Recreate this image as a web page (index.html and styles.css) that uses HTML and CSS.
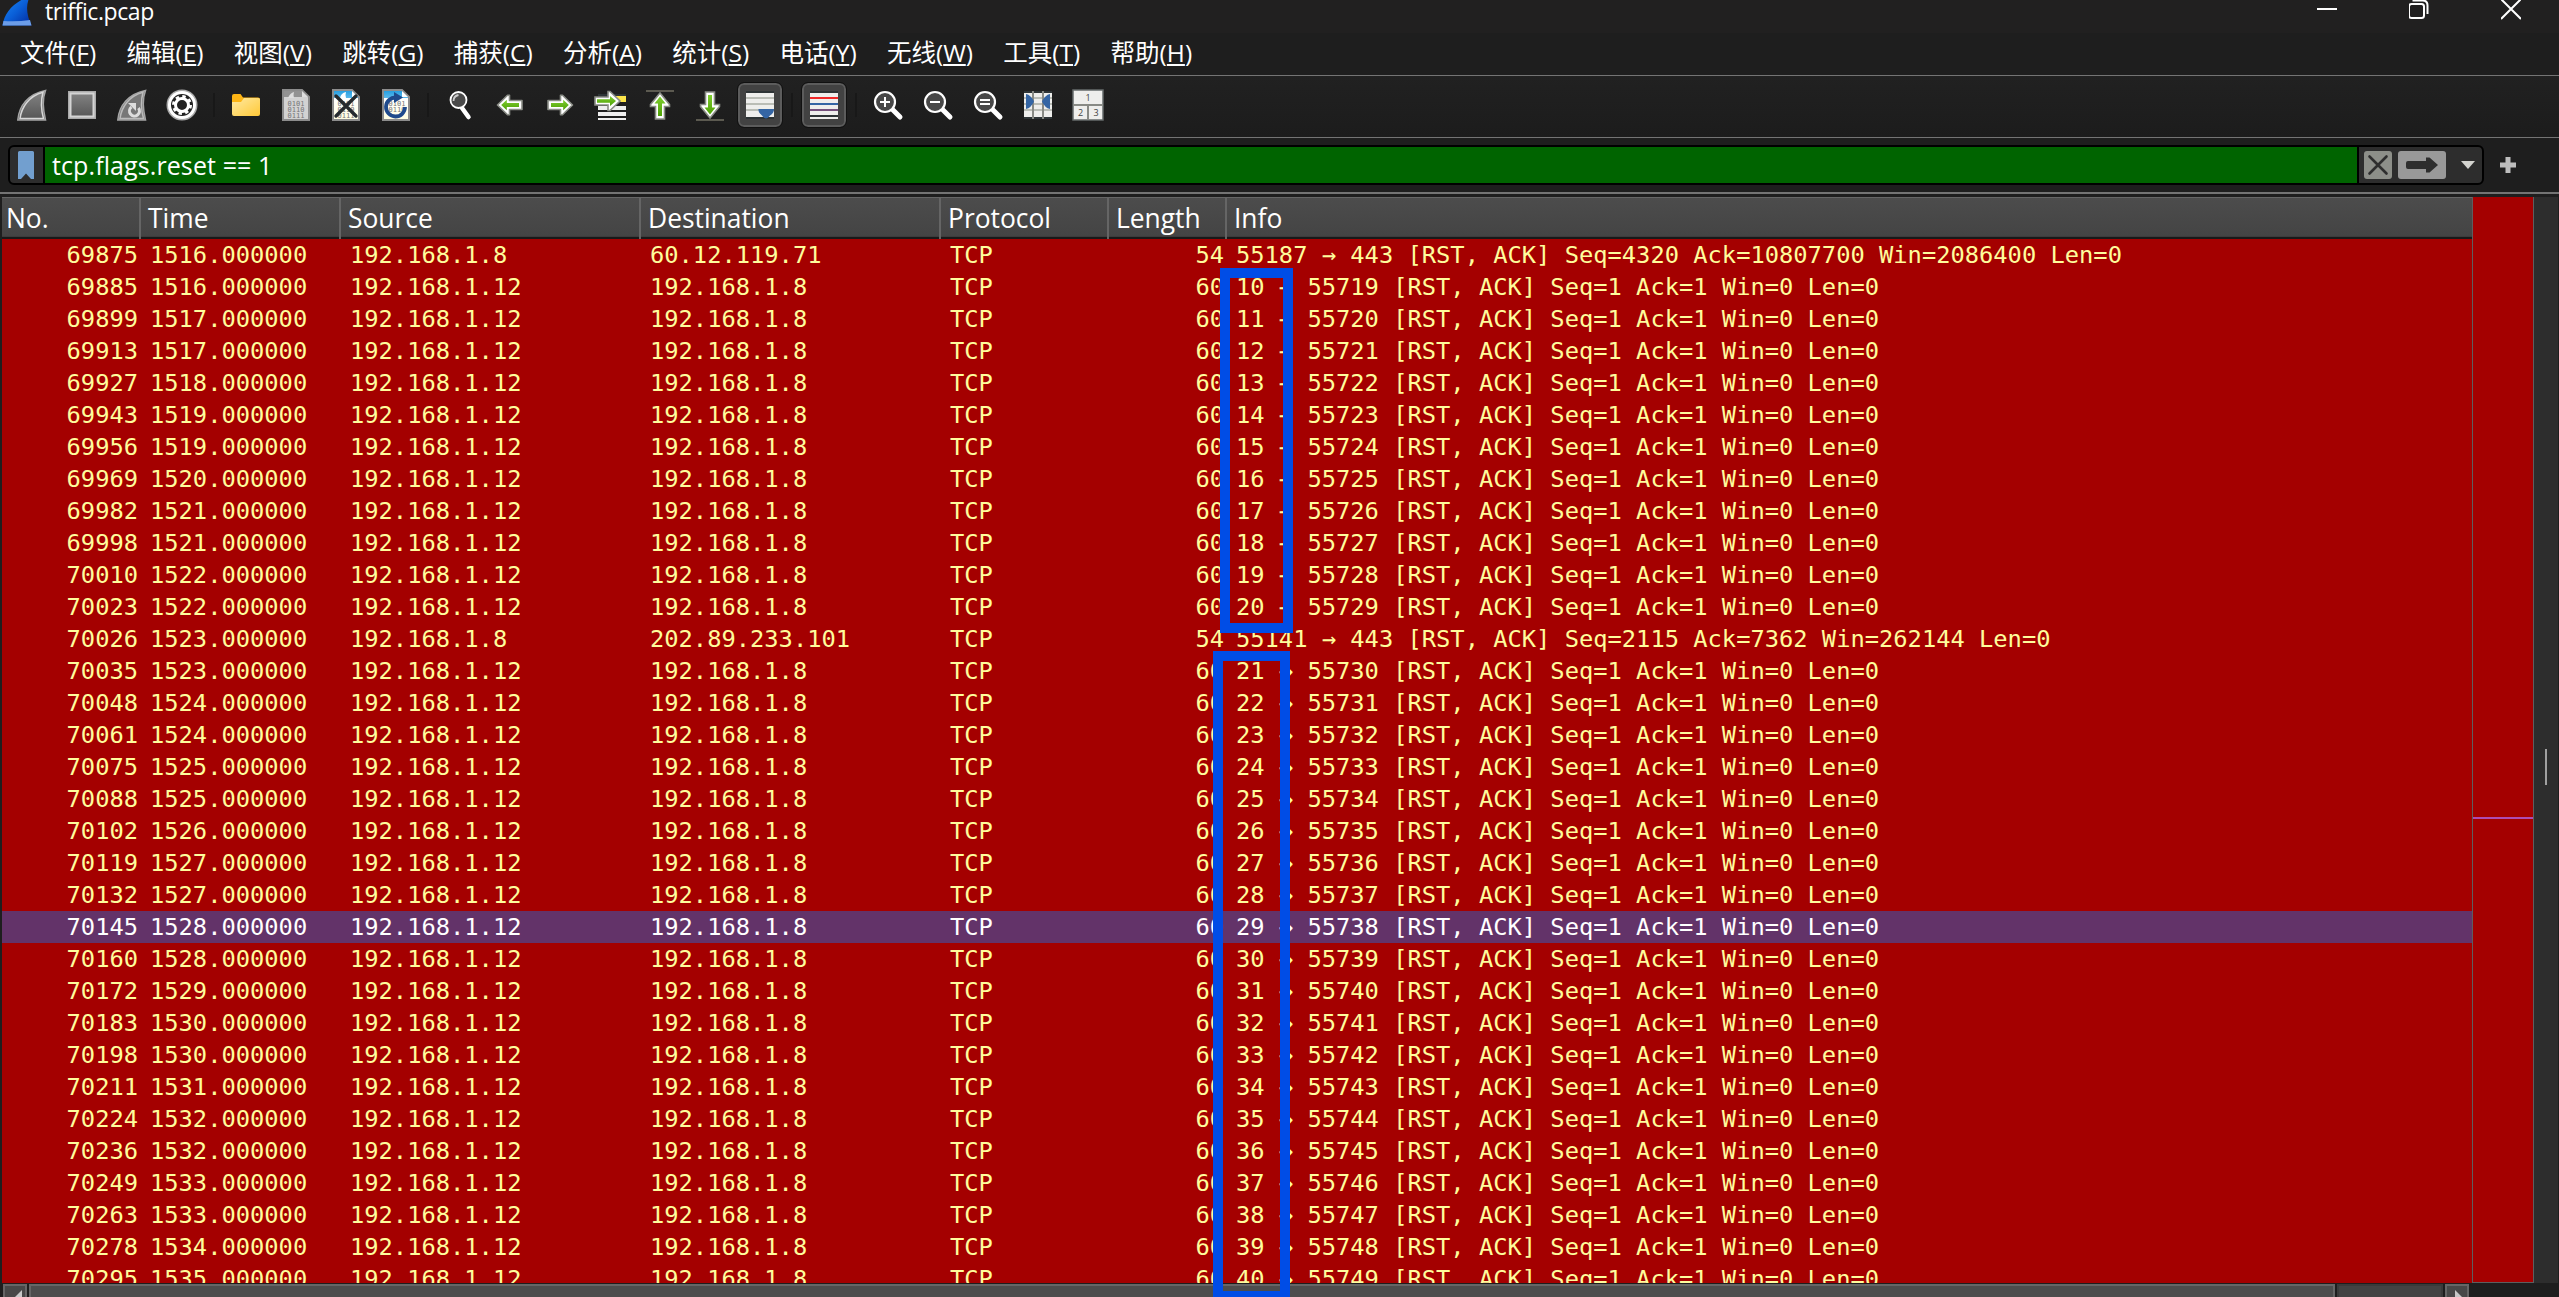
FILE: index.html
```html
<!DOCTYPE html>
<html lang="zh-CN">
<head>
  <meta charset="UTF-8">
  <title>triffic.pcap</title>
  <link rel="stylesheet" href="styles.css">
</head>
<body>
  <svg width="0" height="0" class="defs">
    <defs>
      <linearGradient id="gGreen" x1="0" y1="0" x2="0" y2="1">
        <stop offset="0" stop-color="#7fcf2f"/><stop offset="1" stop-color="#4ea006"/>
      </linearGradient>
      <linearGradient id="gGray" x1="0" y1="0" x2="0" y2="1">
        <stop offset="0" stop-color="#858585"/><stop offset="1" stop-color="#555"/>
      </linearGradient>
      <linearGradient id="gBlue" x1="0" y1="0" x2="1" y2="1">
        <stop offset="0" stop-color="#1d8cf5"/><stop offset="0.5" stop-color="#0a5fd8"/><stop offset="1" stop-color="#03279a"/>
      </linearGradient>
      <linearGradient id="gFolder" x1="0" y1="0" x2="1" y2="1">
        <stop offset="0" stop-color="#ffe9a2"/><stop offset="1" stop-color="#ffc937"/>
      </linearGradient>
      <linearGradient id="gPaper" x1="0" y1="0" x2="0" y2="1">
        <stop offset="0" stop-color="#1f9be0"/><stop offset="0.25" stop-color="#58b7ea"/><stop offset="0.26" stop-color="#fff"/><stop offset="1" stop-color="#fffde0"/>
      </linearGradient>
      <symbol id="arrow" viewBox="0 0 32 32">
        <path d="M4 11.5h12.5V6.2h2L28.5 16 18.500 25.800h-2v-5.300H4z" fill="#fff" stroke="#8a8d86" stroke-width="1.6" stroke-linejoin="round"/>
        <path d="M7 14h12.200v-3.300L24.800 16l-5.600 5.300V18H7z" fill="url(#gGreen)"/>
      </symbol>
      <symbol id="lens" viewBox="0 0 32 32">
        <path d="M20 20l8 8" stroke="#fff" stroke-width="5" stroke-linecap="round"/>
        <circle cx="13" cy="13" r="10" fill="#484848" stroke="#fff" stroke-width="2.200"/>
      </symbol>
    </defs>
  </svg>

  <div class="titlebar">
    <svg class="logo" viewBox="0 0 30 26"><path d="M.5 25.500C2.500 12 12 2 28 -4 23 6 25 16 29.500 25.500z" fill="url(#gBlue)"/><path d="M.5 25.500l1-4.500q13 1 26.500-1l1.500 5.500z" fill="#6c9de8"/></svg>
    <span class="title">triffic.pcap</span>
    <div class="window-buttons">
      <svg width="20" height="20" viewBox="0 0 20 20"><path d="M0 9h20" stroke="#fff" stroke-width="2"/></svg>
      <svg width="20" height="20" viewBox="0 0 20 20" fill="none" stroke="#fff" stroke-width="2"><rect x="0" y="4" width="15" height="14" rx="2.500"/><path d="M3.500 .5h10q5 0 5 5V14"/></svg>
      <svg width="20" height="20" viewBox="0 0 20 20"><path d="M0 -1l20 20M20 -1L0 19" stroke="#fff" stroke-width="2"/></svg>
    </div>
  </div>

  <div class="menubar">
    <span>文件(<u>F</u>)</span>
    <span>编辑(<u>E</u>)</span>
    <span>视图(<u>V</u>)</span>
    <span>跳转(<u>G</u>)</span>
    <span>捕获(<u>C</u>)</span>
    <span>分析(<u>A</u>)</span>
    <span>统计(<u>S</u>)</span>
    <span>电话(<u>Y</u>)</span>
    <span>无线(<u>W</u>)</span>
    <span>工具(<u>T</u>)</span>
    <span>帮助(<u>H</u>)</span>
  </div>

  <div class="toolbar">
    <div class="tool"><svg viewBox="0 0 32 32"><path d="M1.800 31C3 17 12 5 29.500 1.500c-3.500 9-2.500 19 0 29.500z" fill="url(#gGray)" stroke="#a5a5a5" stroke-width="1.500"/><path d="M4 29.500C5.500 18 13 7 27 3.200c-2.500 9-2 17 .5 26.300z" fill="none" stroke="#d8d8d8" stroke-width="1.500"/></svg></div>
    <div class="tool"><svg viewBox="0 0 32 32"><rect x="3" y="3" width="26" height="26" fill="url(#gGray)" stroke="#aaa" stroke-width="2"/><rect x="4.500" y="4.500" width="23" height="23" fill="none" stroke="#d4d4d4" stroke-width="2"/></svg></div>
    <div class="tool"><svg viewBox="0 0 32 32"><path d="M1.800 31C3 17 12 5 29.500 1.500c-3.500 9-2.500 19 0 29.500z" fill="#777" stroke="#a5a5a5" stroke-width="1.500"/><path d="M4 29.500C5.500 18 13 7 27 3.200c-2.500 9-2 17 .5 26.300z" fill="none" stroke="#bbb" stroke-width="1.500"/><path d="M22.500 19a5 5 0 1 1-7-1" fill="none" stroke="#ddd" stroke-width="3"/><path d="M12 14h8v8z" fill="#ddd"/></svg></div>
    <div class="tool"><svg viewBox="0 0 32 32"><circle cx="16" cy="16" r="15.500" fill="#aaa"/><circle cx="16" cy="16" r="14" fill="#fff"/><circle cx="16" cy="16" r="11" fill="#222"/><circle cx="16" cy="16" r="8.500" fill="none" stroke="#fff" stroke-width="3" stroke-dasharray="3.340"/><circle cx="16" cy="16" r="6.500" fill="none" stroke="#fff" stroke-width="3"/></svg></div>
    <div class="sep"></div>
    <div class="tool"><svg viewBox="0 0 32 32"><path d="M2 7q0-2 2-2h6.500l2.500 3.500H28q2 0 2 2V14H2z" fill="#fdb515"/><path d="M2 13h9l3-4h14.500q1.500 0 1.500 1.500V25q0 2-2 2H4q-2 0-2-2z" fill="url(#gFolder)"/></svg></div>
    <div class="tool"><svg viewBox="0 0 32 32"><path d="M3 1h19l7 7v23H3z" fill="#d2d2d2" stroke="#8c8c8c" stroke-width="2"/><path d="M4 2h17.500l5.500 6H4z" fill="#929292"/><path d="M8 9q2-5 6-6-1 3 0 6zM22 2v6h6z" fill="#ddd"/><g class="bits dim"><text x="7.500" y="16.500">0101</text><text x="7.500" y="22.500">0110</text><text x="7.500" y="28.500">0111</text></g></svg></div>
    <div class="tool"><svg viewBox="0 0 32 32"><path d="M3 1h19l7 7v23H3z" fill="url(#gPaper)" stroke="#8c8c8c" stroke-width="2"/><path d="M10 9q1-5 6-6-1 3 0 6zM22 2v6h6z" fill="#fff"/><g class="bits"><text x="7.500" y="16.500">0101</text><text x="7.500" y="22.500">0110</text><text x="7.500" y="28.500">0111</text></g><path d="M6 7l20 20M26 7L6 27" stroke="#252a2e" stroke-width="3.400" stroke-linecap="round"/></svg></div>
    <div class="tool"><svg viewBox="0 0 32 32"><path d="M3 1h19l7 7v23H3z" fill="url(#gPaper)" stroke="#8c8c8c" stroke-width="2"/><path d="M22 2v6h6z" fill="#fff"/><g class="bits"><text x="8.500" y="16.500">0101</text><text x="8.500" y="22.500">0110</text></g><path d="M25 18a9.500 9.500 0 1 1-9-9.500" fill="none" stroke="#1f4a8c" stroke-width="3.800"/><path d="M14 3l9 5.500-9 5.500z" fill="#1f4a8c"/></svg></div>
    <div class="sep"></div>
    <div class="tool"><svg viewBox="0 0 32 32"><path d="M18 19l6.500 9" stroke="#fff" stroke-width="4.500" stroke-linecap="round"/><circle cx="14.500" cy="11" r="8" fill="#4a4a4a" stroke="#fff" stroke-width="1.800"/><path d="M9.500 12q0-5 5-6" fill="none" stroke="#ccc" stroke-width="1.800"/></svg></div>
    <div class="tool"><svg viewBox="0 0 32 32"><use href="#arrow" transform="matrix(-1 0 0 1 32 0)"/></svg></div>
    <div class="tool"><svg viewBox="0 0 32 32"><use href="#arrow"/></svg></div>
    <div class="tool"><svg viewBox="0 0 32 32"><path d="M4 5h28v2H4z" fill="#2e3436"/><path d="M22 7h10v6H22z" fill="#fde54a"/><path d="M4 17h28v4H4zM4 23h28v4H4zM4 29h28v2H4z" fill="#eee"/><path d="M1 8h13V2.500h2L26 12 16 21.500h-2V16H1z" fill="#fff" stroke="#8a8d86" stroke-width="1.600"/><path d="M3 10.300h13V7l6 5-6 5v-3.300H3z" fill="url(#gGreen)"/></svg></div>
    <div class="tool"><svg viewBox="0 0 32 32"><path d="M2 1h28v2H2z" fill="#5c5a50"/><path d="M11.500 30V17.500H6.500v-2L16 4l9.500 11.500v2h-5V30z" fill="#fff" stroke="#8a8d86" stroke-width="1.600"/><path d="M14 27V14.500h-3.500L16 7.500l5.500 7H18V27z" fill="url(#gGreen)"/></svg></div>
    <div class="tool"><svg viewBox="0 0 32 32"><path d="M2 30h28v2H2z" fill="#5c5a50"/><path d="M11.500 3v12.500H6.500v2L16 29l9.500-11.500v-2h-5V3z" fill="#fff" stroke="#8a8d86" stroke-width="1.600"/><path d="M14 6v12.500h-3.500l5.500 7 5.500-7H18V6z" fill="url(#gGreen)"/></svg></div>
    <div class="tool active"><svg viewBox="0 0 32 32"><path d="M2 2h28v28H2z" fill="#eeeeec"/><path d="M2 2h28v2H2zM2 28h28v2H2z" fill="#2e3436"/><path d="M2 8h28v2H2zM2 14h28v2H2zM2 20h28v2H2z" fill="#babdb6"/><path d="M14.500 20h15.500q0 4-4 6.500-2 3-4 3t-4-3q-4-3-3.500-6.500z" fill="#3465a4"/></svg></div>
    <div class="sep"></div>
    <div class="tool active"><svg viewBox="0 0 32 32"><path d="M2 2h28v28H2z" fill="#eeeeec"/><path d="M2 2h28v2H2zM2 26h28v2H2z" fill="#2e3436"/><path d="M2 8h28v2H2z" fill="#ef2929"/><path d="M2 14h28v2H2z" fill="#3465a4"/><path d="M2 20h28v2H2z" fill="#75507b"/></svg></div>
    <div class="sep"></div>
    <div class="tool"><svg viewBox="0 0 32 32"><use href="#lens"/><path d="M8 13h10M13 8v10" stroke="#fff" stroke-width="2"/></svg></div>
    <div class="tool"><svg viewBox="0 0 32 32"><use href="#lens"/><path d="M8 13h10" stroke="#fff" stroke-width="2"/></svg></div>
    <div class="tool"><svg viewBox="0 0 32 32"><use href="#lens"/><path d="M8 11h10M8 15h10" stroke="#fff" stroke-width="2"/></svg></div>
    <div class="tool"><svg viewBox="0 0 32 32"><path d="M2 2h28v28H2z" fill="#eeeeec"/><path d="M2 2h28v2H2zM2 28h28v2H2z" fill="#2e3436"/><path d="M2 8h28v2H2zM2 14h28v2H2zM2 20h28v2H2z" fill="#babdb6"/><path d="M10 2h2v28h-2zM20 2h2v28h-2z" fill="#888a85"/><path d="M4 5q5 1 8 7.500Q9 19 4 20zM28 5q-5 1-8 7.500 3 6.500 8 7.500z" fill="#3465a4"/></svg></div>
    <div class="tool"><svg viewBox="0 0 32 32"><path d="M1 1h30v30H1z" fill="#eeeeec" stroke="#666b6b" stroke-width="1.500"/><path d="M1 16h30M16 16v15" stroke="#888a85" stroke-width="2"/><g class="panes"><text x="16" y="12">1</text><text x="8.500" y="27">2</text><text x="24" y="27">3</text></g></svg></div>
  </div>

  <div class="filterbar">
    <div class="filter">
      <div class="bookmark"><svg width="16" height="28" viewBox="0 0 16 28"><path d="M0 1.500Q0 0 1.500 0h13Q16 0 16 1.500V28l-3 0-5-5.500L3 28H0z" fill="#729fcf"/></svg></div>
      <div class="expression">tcp.flags.reset == 1</div>
      <div class="filter-buttons">
        <svg width="28" height="28" viewBox="0 0 28 28"><rect width="28" height="28" rx="3" fill="#8d8f89"/><path d="M5.500 5.500l17 17M22.500 5.500l-17 17" stroke="#2e2e2e" stroke-width="2.600" stroke-linecap="round"/></svg>
        <svg width="48" height="28" viewBox="0 0 48 28"><rect width="48" height="28" rx="3" fill="#999"/><path d="M10 10h18V6.500h3.500L40 14l-8.500 7.500H28V18H10q-2 0-2-2v-4q0-2 2-2z" fill="#2e2e2e"/></svg>
        <svg class="caret" width="14" height="8" viewBox="0 0 14 8"><path d="M0 0h14L7 8z" fill="#d3d3cf"/></svg>
      </div>
    </div>
    <svg class="plus" width="16" height="16" viewBox="0 0 16 16"><path d="M0 8h16M8 0v16" stroke="#bdbdbd" stroke-width="5"/></svg>
  </div>

  <div class="main">
    <div class="packets">
      <div class="header">
        <span>No.</span><span>Time</span><span>Source</span><span>Destination</span><span>Protocol</span><span>Length</span><span>Info</span>
      </div>
      <div class="rows" id="rows"></div>
      <div class="hscroll">
        <div class="hbtn"><svg width="24" height="24" viewBox="0 0 24 24"><path d="M17 4v20L7 14z" fill="#c8c8c8"/></svg></div>
        <div class="thumb"></div>
        <div class="groove"></div>
        <div class="hbtn"><svg width="24" height="24" viewBox="0 0 24 24"><path d="M8 4v20l10-10z" fill="#c8c8c8"/></svg></div>
      </div>
    </div>
    <div class="minimap"><div class="map"><div class="mark"></div></div></div>
    <div class="splitter"><div class="handle"></div></div>
  </div>

  <div class="annotation first"></div>
  <div class="annotation second"></div>

  <script src="packets.js"></script>
</body>
</html>
```
FILE: styles.css
```css
* {
  box-sizing: border-box;
  margin: 0;
  padding: 0;
}

body {
  width: 2559px;
  height: 1297px;
  overflow: hidden;
  position: relative;
  display: flex;
  flex-direction: column;
  background: #1e1e1e;
  color: #fff;
  font-family: "Open Sans", "Noto Sans CJK SC", sans-serif;
  font-size: 24px;
}

svg {
  display: block;
  flex: none;
}

.defs {
  position: absolute;
}

.titlebar {
  height: 33px;
  display: flex;
  padding-left: 2px;
  background: #212020;
}

.logo {
  width: 30px;
  height: 26px;
}

.title {
  margin-left: 13px;
  font-size: 23px;
  line-height: 23px;
  letter-spacing: -0.4px;
}

.window-buttons {
  display: flex;
  gap: 72px;
  margin-left: auto;
  padding-right: 38px;
}

.menubar {
  height: 43px;
  display: flex;
  gap: 30.3px;
  padding-left: 20px;
  font-size: 24.5px;
  line-height: 39px;
  white-space: nowrap;
  border-bottom: 1px solid #747474;
}

.menubar u {
  text-underline-offset: 2px;
  text-decoration-thickness: 2px;
}

.toolbar {
  height: 62px;
  display: flex;
  align-items: flex-start;
  padding: 7px 0 0 7px;
  background: linear-gradient(#212121, #1c1c1c);
  border-bottom: 1px solid #747474;
}

.tool {
  width: 44px;
  height: 44px;
  margin: 0 3px;
  display: flex;
  align-items: center;
  justify-content: center;
}

.tool svg {
  width: 32px;
  height: 32px;
}

.tool.active {
  background: #424242;
  border: 2px solid #5c5c5c;
  border-radius: 6px;
  outline: 1px solid #111;
}

.sep {
  width: 2px;
  height: 24px;
  margin: 10px 6px;
  background: #181818;
}

.bits text {
  font-family: "DejaVu Sans Mono", monospace;
  font-size: 7px;
  fill: #777;
}

.panes text {
  font-size: 9px;
  fill: #444;
  text-anchor: middle;
}

.filterbar {
  height: 56px;
  display: flex;
  padding: 7px 0 0 8px;
  border-bottom: 2px solid #747474;
}

.filter {
  width: 2476px;
  height: 40px;
  display: flex;
  background: #2d2d2d;
  border: 2px solid #000;
  border-radius: 6px;
}

.bookmark {
  width: 35px;
  padding: 4px 0 0 8px;
  border-right: 2px solid #000;
}

.expression {
  width: 2314px;
  padding-left: 7px;
  line-height: 37px;
  font-size: 25px;
  letter-spacing: 0.1px;
  background: #006400;
  border-right: 2px solid #000;
}

.filter-buttons {
  display: flex;
  gap: 6px;
  padding: 4px 0 0 5px;
}

.caret {
  margin: 10px 0 0 9px;
}

.plus {
  margin: 12px 0 0 16px;
}

.main {
  flex: 1;
  display: flex;
  min-height: 0;
  padding-top: 3px;
}

.packets {
  width: 2472px;
  padding-left: 2px;
  display: flex;
  flex-direction: column;
}

.header,
.row {
  display: grid;
  grid-template-columns: 140px 200px 300px 300px 168px 118px 1fr;
}

.header {
  height: 42px;
  flex: none;
  background: linear-gradient(#4c4c4c, #444);
  border-top: 1px solid #666;
  border-bottom: 2px solid #191919;
  box-shadow: inset 0 -1px #3c3c3c;
  font-size: 26.400px;
  line-height: 41px;
}

.header span {
  margin-right: 1px;
  padding-left: 6px;
  border-right: 2px solid #656565;
}

.header span:first-child {
  padding-left: 4px;
}

.header span:last-child {
  border-right: none;
}

.rows {
  flex: none;
  height: 1044px;
  overflow: hidden;
  background: #a40000;
  color: #fffc9c;
  font-family: "DejaVu Sans Mono", monospace;
  font-size: 23.74px;
}

.row {
  height: 32px;
  line-height: 33px;
  white-space: pre;
}

.row span {
  padding-left: 8px;
}

.row .num {
  padding: 0 4px 0 0;
  text-align: right;
}

.row.selected {
  background: #633369;
  color: #fff;
}

.hscroll {
  flex: 1;
  display: flex;
  gap: 2px;
  padding: 1px 0 0 1px;
}

.hscroll > div {
  border: 2px solid #666;
  border-bottom: none;
}

.hscroll .hbtn {
  width: 24px;
  background: #484848;
  overflow: hidden;
}

.hscroll .thumb {
  width: 2306px;
  background: #4d4d4d;
}

.hscroll .groove {
  width: 106px;
  background: #434343;
  border-color: #3a3a3a;
}

.minimap {
  width: 62px;
}

.map {
  height: 1086px;
  background: #a40000;
  border: 1px solid #5e5e5e;
  border-top: none;
}

.mark {
  height: 622px;
  border-bottom: 2px solid #ad4cb4;
}

.splitter {
  width: 24px;
  height: 1086px;
  padding: 552px 0 0 11px;
  background: #2d2d2d;
}

.handle {
  width: 2px;
  height: 36px;
  background: #a0a0a0;
}

/* boxes drawn over the source port column */
.annotation {
  position: absolute;
  border: 10px solid #004de6;
}

.annotation.first {
  left: 1220px;
  top: 268px;
  width: 73px;
  height: 365px;
}

.annotation.second {
  left: 1213px;
  top: 651px;
  width: 77px;
  height: 650px;
}
```
FILE: packets.js
```js
const LOCAL = '192.168.1.8';
const TARGET = '192.168.1.12';

// number and second of each reset sent back by the target
const resets = [
  [69885, 1516], [69899, 1517], [69913, 1517], [69927, 1518], [69943, 1519],
  [69956, 1519], [69969, 1520], [69982, 1521], [69998, 1521], [70010, 1522],
  [70023, 1522], [70035, 1523], [70048, 1524], [70061, 1524], [70075, 1525],
  [70088, 1525], [70102, 1526], [70119, 1527], [70132, 1527], [70145, 1528],
  [70160, 1528], [70172, 1529], [70183, 1530], [70198, 1530], [70211, 1531],
  [70224, 1532], [70236, 1532], [70249, 1533], [70263, 1533], [70278, 1534],
  [70295, 1535]
];

const packets = resets.map(([no, sec], i) => [
  no, sec, TARGET, LOCAL, 60,
  `${10 + i} → ${55719 + i} [RST, ACK] Seq=1 Ack=1 Win=0 Len=0`
]);

packets.push(
  [69875, 1516, LOCAL, '60.12.119.71', 54, '55187 → 443 [RST, ACK] Seq=4320 Ack=10807700 Win=2086400 Len=0'],
  [70026, 1523, LOCAL, '202.89.233.101', 54, '55141 → 443 [RST, ACK] Seq=2115 Ack=7362 Win=262144 Len=0']
);
packets.sort((a, b) => a[0] - b[0]);

document.getElementById('rows').innerHTML = packets.map(([no, sec, src, dst, len, info]) => `
  <div class="row${no === 70145 ? ' selected' : ''}">
    <span class="num">${no}</span><span>${sec}.000000</span><span>${src}</span><span>${dst}</span><span>TCP</span><span class="num">${len}</span><span>${info}</span>
  </div>`).join('');
```
